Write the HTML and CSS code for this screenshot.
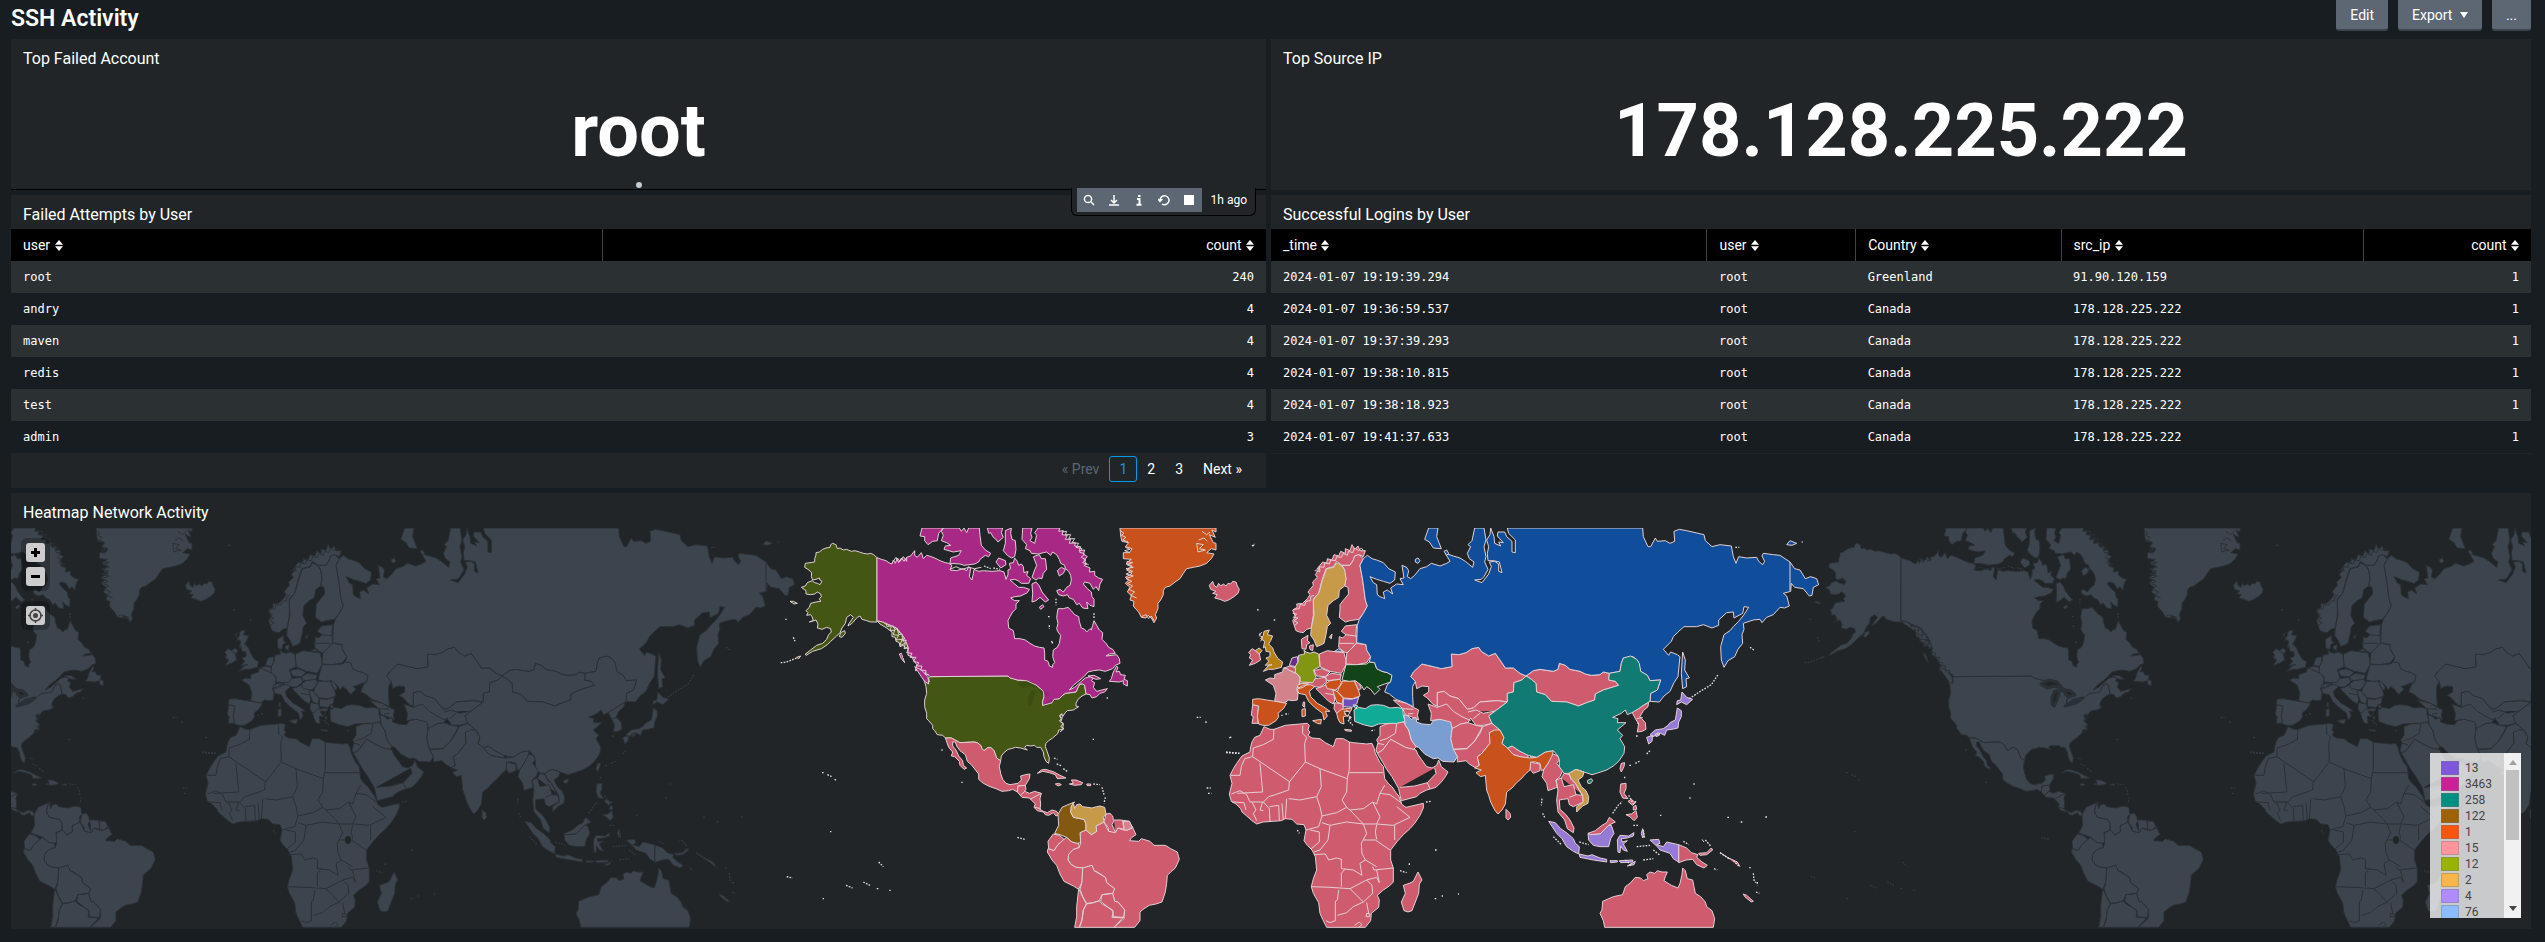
FILE: index.html
```html
<!DOCTYPE html>
<html lang="en">
<head>
<meta charset="utf-8">
<title>SSH Activity</title>
<link rel="stylesheet" href="styles.css">
</head>
<body>
<svg class="defs" aria-hidden="true">
  <symbol id="sort" viewBox="0 0 8 11"><path fill="currentColor" d="M0 4.700 4 0l4 4.700zM0 6.300h8L4 11z"/></symbol>
</svg>
<header class="top">
  <h1>SSH Activity</h1>
  <div class="actions">
    <button class="btn">Edit</button>
    <button class="btn">Export <svg class="caret" viewBox="0 0 8 6"><path fill="currentColor" d="M0 0h8L4 6z"/></svg></button>
    <button class="btn">...</button>
  </div>
</header>
<main>
  <div class="row">
    <section class="panel single hovered">
      <h2>Top Failed Account</h2>
      <p class="value">root</p>
      <span class="dot"></span>
      <div class="tools">
        <div class="toolset">
          <button aria-label="Open in search"><svg viewBox="0 0 12 12"><circle cx="5" cy="5" r="3.600"/><path d="M7.800 7.800 11 11"/></svg></button>
          <button aria-label="Download"><svg viewBox="0 0 12 12"><path d="M6 1v8M3 6l3 3 3-3M1 11h10"/></svg></button>
          <button aria-label="Inspect"><svg viewBox="0 0 12 12"><path d="M4 5h2.500v5.500M3.500 10.700h5M5 2h2.500" stroke-width="2"/></svg></button>
          <button aria-label="Refresh"><svg viewBox="0 0 12 12"><path d="M2 6a4.500 4.500 0 1 1 2 4M0 5l2 2.400L4.300 5"/></svg></button>
          <button aria-label="Stop"><svg viewBox="0 0 12 12"><path class="solid" d="M1 1h10v10H1z"/></svg></button>
        </div>
        <span>1h ago</span>
      </div>
    </section>
    <section class="panel single">
      <h2>Top Source IP</h2>
      <p class="value">178.128.225.222</p>
    </section>
  </div>

  <div class="row">
    <section class="panel">
      <h2>Failed Attempts by User</h2>
      <table>
        <colgroup><col class="w47"><col></colgroup>
        <thead><tr><th><button>user <svg><use href="#sort"/></svg></button></th><th class="num"><button>count <svg><use href="#sort"/></svg></button></th></tr></thead>
        <tbody>
          <tr><td>root</td><td class="num">240</td></tr>
          <tr><td>andry</td><td class="num">4</td></tr>
          <tr><td>maven</td><td class="num">4</td></tr>
          <tr><td>redis</td><td class="num">4</td></tr>
          <tr><td>test</td><td class="num">4</td></tr>
          <tr><td>admin</td><td class="num">3</td></tr>
        </tbody>
      </table>
      <nav class="pages" aria-label="Pagination">
        <a class="off">« Prev</a><a class="current" href="#">1</a><a href="#">2</a><a href="#">3</a><a class="next" href="#">Next »</a>
      </nav>
    </section>
    <section class="panel short">
      <h2>Successful Logins by User</h2>
      <table>
        <colgroup><col class="w34"><col class="w12"><col class="w16"><col class="w24"><col></colgroup>
        <thead><tr><th><button>_time <svg><use href="#sort"/></svg></button></th><th><button>user <svg><use href="#sort"/></svg></button></th><th><button>Country <svg><use href="#sort"/></svg></button></th><th><button>src_ip <svg><use href="#sort"/></svg></button></th><th class="num"><button>count <svg><use href="#sort"/></svg></button></th></tr></thead>
        <tbody>
          <tr><td>2024-01-07 19:19:39.294</td><td>root</td><td>Greenland</td><td>91.90.120.159</td><td class="num">1</td></tr>
          <tr><td>2024-01-07 19:36:59.537</td><td>root</td><td>Canada</td><td>178.128.225.222</td><td class="num">1</td></tr>
          <tr><td>2024-01-07 19:37:39.293</td><td>root</td><td>Canada</td><td>178.128.225.222</td><td class="num">1</td></tr>
          <tr><td>2024-01-07 19:38:10.815</td><td>root</td><td>Canada</td><td>178.128.225.222</td><td class="num">1</td></tr>
          <tr><td>2024-01-07 19:38:18.923</td><td>root</td><td>Canada</td><td>178.128.225.222</td><td class="num">1</td></tr>
          <tr><td>2024-01-07 19:41:37.633</td><td>root</td><td>Canada</td><td>178.128.225.222</td><td class="num">1</td></tr>
        </tbody>
      </table>
    </section>
  </div>

  <section class="panel">
    <h2 class="maptitle">Heatmap Network Activity</h2>
    <div class="map">
      <svg class="world" viewBox="11 528 2520 400" preserveAspectRatio="xMidYMid slice" role="img" aria-label="World map of network activity">
        <defs>
          <g id="land">
            <g transform="translate(780 500) scale(.33333)">
              <g class="olive">
                <path d="M291 173L281 164 272 160 262 162 250 160 238 156 225 152 214 154 200 148 190 150 180 144 172 146 168 134 158 130 152 134 150 142 138 144 128 148 118 156 108 158 108 165 104 176 104 186 90 188 76 190 74 202 84 208 95 218 94 230 98 240 108 238 118 234 120 240 126 244 120 254 112 250 104 248 96 242 82 248 76 258 64 262 78 272 78 282 92 284 104 282 112 276 122 282 124 290 118 296 122 304 108 306 92 310 88 322 78 332 84 338 80 346 92 344 96 350 100 362 88 366 108 360 114 372 112 384 126 388 140 382 152 386 154 396 146 404 140 418 128 430 110 436 92 450 76 462 78 466 98 454 124 446 142 434 152 424 170 408 180 398 186 384 196 370 200 352 212 344 220 352 206 372 204 378 216 370 232 352 240 348 246 358 260 362 272 366 291 366Z"/>
                <path d="M291 362L308 366 318 372 322 380 336 376 342 384 350 384 356 396 364 400 372 412 370 424 380 430 384 440 376 444 370 436 360 440 358 428 348 424 346 412 336 410 336 396 320 384 300 372ZM178 410l4-12 12-6 2 8-10 12zM50 472l12-4-6 8zM30 304l10 0 12 6-10 2z"/>
                <path d="M450 530L684 528 690 534 704 536 712 540 726 542 740 542 758 548 770 556 780 564 790 574 792 590 788 604 788 616 802 612 816 608 822 598 838 596 848 586 856 580 888 576 894 562 900 552 908 552 914 556 918 582 906 588 894 598 888 610 888 618 896 620 880 630 862 632 856 638 848 650 846 642 840 650 846 660 840 664 850 672 848 688 836 690 834 700 818 714 806 722 798 730 796 740 802 756 808 774 806 790 798 784 792 770 790 756 782 742 770 742 764 736 752 738 740 736 734 742 742 750 722 744 706 742 694 746 684 748 672 758 664 768 662 782 650 776 646 764 642 752 632 742 622 744 612 752 606 746 602 736 592 728 582 726 540 728 514 714 496 714 488 706 472 704 464 692 458 686 458 676 446 662 440 656 440 640 434 620 434 600 440 580 438 560 432 540 442 538 442 550 448 546 446 534Z"/>
              </g>
              <g class="magenta">
                <path d="M291 173L304 178 318 182 330 190 336 192 340 180 346 190 352 174 360 184 370 170 380 184 380 172 392 168 404 152 404 166 412 172 424 158 430 176 440 166 448 168 464 174 480 182 496 188 506 190 516 196 510 210 530 212 548 206 560 212 566 200 572 204 568 230 576 240 580 220 582 208 596 214 610 212 636 214 660 212 672 216 678 238 684 224 684 210 692 206 688 190 700 188 704 174 712 184 716 196 724 192 730 200 732 218 744 214 740 226 752 236 746 250 724 250 714 242 704 238 690 240 704 252 716 262 730 262 748 268 742 278 722 288 704 290 692 294 704 302 718 302 708 312 708 326 698 336 690 350 684 362 686 384 700 392 704 416 720 416 736 420 750 430 764 438 778 442 792 444 794 460 794 480 804 484 808 498 818 502 818 494 824 488 818 470 820 450 832 442 838 430 842 406 834 396 830 386 834 370 830 352 834 326 850 326 864 322 874 332 884 344 896 350 898 364 904 384 914 388 920 396 930 386 934 390 938 376 942 362 950 376 958 390 968 398 966 418 978 430 986 442 998 448 1006 460 988 462 978 468 996 466 1010 464 1018 476 1020 490 1006 496 998 506 976 514 958 510 940 512 924 516 914 528 900 540 880 556 868 570 884 562 904 544 916 534 930 530 942 532 934 542 944 548 940 562 950 574 966 570 982 566 974 576 960 580 950 590 936 594 932 588 930 584 918 582 914 556 908 552 900 552 894 562 888 576 856 580 848 586 838 596 822 598 816 608 802 612 788 616 788 604 792 590 790 574 770 556 740 542 712 540 690 534 684 528 450 530 440 520 428 520 420 510 406 512 410 494 400 480 396 470 384 466 384 440 372 412 350 384 336 378 308 366 291 362Z"/>
                <path d="M484 94L490 84 538 84 544 94 552 84 560 98 566 84 598 84 600 106 604 136 616 150 632 160 626 170 616 166 600 178 596 186 584 192 552 196 540 192 510 190 512 174 536 166 544 152 520 156 492 148 496 138 512 136 500 128 484 122 490 106ZM426 84L490 84 476 100 472 122 458 124 444 134 434 122 434 110 420 108ZM622 84L668 84 664 98 670 112 654 126 646 116 640 112 632 98 626 100ZM676 92L694 84 692 100 696 118 706 122 708 148 704 170 694 174 682 166 670 152 676 130Z"/>
                <path d="M728 84L756 84 752 100 756 112 750 122 764 130 770 106 764 98 774 84 840 84 836 94 850 92 846 104 862 106 856 118 872 118 868 130 886 128 884 138 902 140 898 152 914 150 910 162 922 170 912 180 920 192 912 196 930 204 928 216 944 214 944 226 956 234 968 238 960 252 956 272 948 260 940 268 930 250 914 246 910 252 922 266 934 276 936 290 942 298 942 320 930 316 920 306 924 326 908 324 898 310 890 314 880 298 868 294 862 284 850 288 836 284 830 272 840 268 850 276 860 262 870 256 874 240 872 226 866 214 856 206 854 196 842 190 838 178 830 164 818 156 812 166 800 156 790 158 776 162 754 160 750 152 736 146 740 134 726 118Z"/>
                <path d="M760 170L778 164 784 176 796 176 798 190 800 208 790 220 786 236 776 234 768 240 756 232 764 210 770 196ZM756 252L768 246 778 258 786 276 796 288 806 300 796 306 780 292 768 302 756 306 758 280ZM832 212l12-10 12 6-6 12-12 8zM778 322l10-8 4 6-10 8zM648 186l8-12 20 8 2 12-16 10zM1010 498L1014 504 1008 516 1018 514 1022 524 1036 526 1032 538 1042 542 1042 558 1030 552 1030 542 1018 546 988 544 994 536 1000 516ZM404 500L424 510 444 530 446 552 434 544 424 530ZM358 462l6-2 4 12 6 16-10-12zM924 528l18-2 20 10-14 2z"/>
              </g>
              <g class="pink">
                <path d="M496 714L514 714 540 728 582 726 592 728 602 736 606 746 612 752 622 744 632 742 642 752 650 774 662 782 658 800 662 820 668 838 678 850 690 854 714 850 724 840 722 828 736 824 750 822 748 836 736 856 714 858 712 876 698 868 686 872 666 874 648 866 630 860 610 850 596 838 596 822 588 812 574 794 562 784 556 764 540 752 530 738 526 726 518 726 518 738 528 750 536 768 548 782 550 796 560 804 552 808 540 796 538 784 524 770 514 768 518 756 506 742Z"/>
                <path d="M712 876L714 858 736 856 738 868 734 874 748 880 764 874 784 880 780 896 782 912 780 928 790 934 802 938 816 930 830 934 836 944 828 948 820 938 806 946 796 944 790 936 772 932 762 922 766 912 748 894 726 892Z M734 874L720 888M750 898L784 880M764 922L782 926"/>
                <path d="M772 820L784 810 796 808 810 812 822 816 840 826 858 834 832 836 826 824 808 818 788 814ZM868 852L880 850 874 840 888 840 908 848 904 854 884 856ZM826 852l10-2 8 4-10 4zM920 852h12v5h-10z"/>
                <path d="M820 1002L838 1006 852 1018 834 1034 822 1052 806 1046 804 1024Z"/>
                <path d="M972 966L986 994 1006 996 1014 984 1030 990 1042 990 1056 978 1068 1004 1056 1012 1048 1022 1076 1024 1084 1016 1110 1024 1122 1036 1156 1036 1172 1046 1192 1056 1198 1078 1186 1104 1172 1116 1162 1126 1160 1150 1156 1176 1146 1206 1128 1212 1108 1216 1092 1226 1080 1236 1080 1262 1064 1282 1002 1282 1032 1256 1034 1230 1014 1206 1004 1204 998 1180 1004 1166 980 1148 976 1132 952 1116 942 1112 936 1096 912 1104 888 1102 874 1094 864 1080 866 1062 880 1048 898 1042 902 1028 900 998 918 990 934 1004 950 994 948 978Z"/>
                <path d="M978 942L990 940 998 948 1000 960 1022 960 1048 964 1058 984 1042 990 1014 984 1006 998 986 994 984 982 972 966ZM1002 962L996 974 1006 996M1028 962L1032 990"/>
                <path d="M804 1046L822 1052 834 1034 852 1018 860 1012 876 1026 896 1030 898 1042 880 1048 866 1062 864 1080 874 1094 888 1102 908 1104 906 1146 896 1168 880 1158 852 1144 840 1122 830 1096 816 1080 802 1056Z"/>
                <path d="M908 1104L936 1096 942 1112 976 1132 980 1148 1004 1166 998 1180 966 1184 958 1202 940 1208 920 1212 908 1190 900 1168 906 1146ZM896 1166L908 1190 920 1212 910 1230 906 1260 898 1282 884 1282 890 1250 890 1220ZM920 1210L940 1208 958 1202 966 1212 998 1230 1000 1250 1030 1252 1002 1282 898 1282 906 1260 910 1230ZM966 1184L998 1180 1004 1204 1014 1206 1034 1230 1030 1254 996 1252 1000 1234 982 1220 962 1204Z"/>
                <path d="M1288 256L1298 244 1302 256 1310 262 1316 250 1322 258 1330 252 1338 258 1344 250 1352 252 1358 244 1368 246 1372 258 1378 268 1374 280 1362 290 1346 300 1334 304 1320 298 1304 294 1312 284 1298 280 1308 274 1292 268Z"/>
              </g>
              <path class="rose" d="M1030 964L1048 964 1056 980 1044 990 1032 990Z"/>
              <path class="brown" d="M834 944L846 922 864 914 884 906 874 918 872 936 880 952 912 958 918 972 918 990 900 998 902 1028 892 1030 876 1026 860 1012 840 1004 824 1000 836 976Z"/>
              <path class="tan" d="M880 908L884 926 890 914 900 912 908 920 936 924 950 920 960 918 974 922 978 942 970 952 972 966 948 978 950 994 934 1004 918 990 918 972 912 958 880 952 872 936 874 920Z"/>
              <path class="orange" d="M1020 84L1308 84 1308 96 1296 90 1306 112 1288 104 1300 128 1308 130 1308 150 1294 146 1280 158 1302 162 1294 176 1280 190 1260 198 1240 202 1220 206 1210 220 1200 236 1188 244 1170 258 1156 262 1150 272 1150 284 1142 300 1134 310 1134 326 1126 344 1130 354 1122 368 1114 354 1104 346 1098 354 1084 352 1076 336 1068 328 1060 318 1062 304 1050 300 1054 286 1042 276 1050 262 1036 250 1046 240 1036 232 1056 220 1040 210 1056 198 1038 190 1054 178 1030 176 1030 158 1048 158 1056 146 1036 140 1046 128 1026 124 1022 108ZM1250 130l20 4-12 12 18 4-22 6z"/>
              <path class="line" d="M318 372l16 8-4 12 14-2-4 14 16 2-8 14 18-2-6 18 16-6-4 16 14-2-6 14 16 2-6 12 18 0-8 12 16 4-4 10 14 0-4 12 16 2-2 12 10 0M338 376l8 14 6-4 4 18 10-2 2 20 12 0M1022 92l10 8-8 6 14 6-10 8 16 6M1036 142l14 6-16 4 16 6M1040 184l18 4-18 6 20 8-22 4 20 8-20 8 22 6-22 8 18 8-14 6 16 8-12 10 18 8-12 10 18 8M1084 350l14-6 8 12 8-8 8 14M1266 94l14 10 10-8M1256 120l16-6 10 10M846 96l14-2-4 10 16 0-6 12 18 0-8 12 20 2-8 12 18 4-8 10 16 6-10 10 14 8-10 8 18 6M846 640l-8 8 10 6-10 8 12 8-8 10 10 6-12 10M340 184l8-12 8 16 8-14 8 10 8-12M510 208l18-8 18 8 20-6 18 4 20-4"/>
              <path class="islands" d="M2 488L16 487 30 482 50 474M126 818h5M142 824l14 6M164 838l7 5M16 358h4M40 412l5 12M544 847h4M484 750h4M150 995h4M712 1012l22 6M296 1086l14 14M250 1146l20 10M290 1166h5M198 1156l20 8M20 1130l18 4M128 1196h4M328 1171h4M822 774l10 4M830 792l16 6M850 806l14 10M940 852l20 2M966 862l6 22M976 892l-4 18M1250 652h12M1278 664v7M1350 712h4M1338 758l38 2M1280 864h12M1284 880h10M938 718h4M980 594h4M1418 138l6-4M808 376v10M814 424l6 6M816 430l4-8M804 350h5M828 296v20M942 340v16M612 198l20 8M640 204l20 4"/>
            </g>
            <g transform="translate(1220 500) scale(.33333)">
              <g class="pink">
                <path d="M218 330L232 322 230 312 248 310 262 296 270 284 264 276 280 256 278 246 292 232 286 224 298 206 290 208 308 186 320 190 322 176 336 180 342 164 356 168 362 154 376 160 376 146 390 152 396 134 404 148 414 138 420 152 436 152 430 170 416 164 404 168 400 180 390 196 366 196 350 184 340 200 318 206 306 240 296 280 280 296 280 346 274 384 260 388 250 398 238 396 228 392 218 362 226 350Z"/>
                <path d="M366 196L390 196 400 180 404 168 416 164 430 176 420 196 428 240 436 300 442 318 430 340 416 358 390 362 376 366 358 352 360 330 360 314 374 296 386 282 384 262 374 258 378 236 372 206Z"/>
                <path d="M244 418L264 406 262 422 270 428 260 434 258 448 246 446ZM268 438l12-4-2 18-8-4zM96 446L106 452 118 462 122 480 106 490 88 496 98 480 88 474 92 464 86 458ZM192 504L210 498 228 504 232 522 210 512ZM98 614L116 618 114 640 114 670 96 670 100 650 94 646ZM232 552L262 548 262 558 250 564 234 564ZM298 462L322 452 350 456 372 458 378 480 378 494 364 520 330 514 300 500ZM282 512L306 506 330 516 316 530 290 528ZM262 548L284 536 316 532 320 546 300 562 270 558ZM316 530L334 520 364 524 360 538 322 542ZM402 542L416 546 424 564 416 572ZM288 566L316 556 340 570 344 600 340 612 326 604 302 580ZM316 580L340 584M344 608L368 612 370 626 350 640 342 626ZM250 606l4 0 0 16-6-4z"/>
                <path d="M358 410L368 414 378 404 364 394 376 378 410 374 408 400 410 428 396 444 382 458 372 456 356 442ZM376 404L408 408M358 430L402 430M410 430L438 434 440 450 452 470 440 488 410 494 378 492 380 460 396 444Z"/>
                <path d="M572 530L580 516 594 500 606 492 640 500 664 506 696 500 694 462 716 464 738 458 756 446 776 442 784 454 806 468 826 460 840 480 856 504 880 504 900 520 918 528 906 540 882 548 880 576 862 580 862 606 832 602 800 604 780 606 760 624 742 628 716 596 690 588 672 574 652 578 652 618 640 614 622 594 610 586 626 576 626 560 606 558 590 566 586 544Z"/>
                <path d="M652 578L672 574 690 588 716 596 742 628 760 624 780 606 832 602 862 606 830 630 808 646 816 670 790 676 768 676 752 654 744 668 722 672 700 686 680 664 656 658 632 662 634 640 624 612 652 622ZM652 622L680 612 700 634 726 650 752 662M744 636L768 630 790 640 830 632M760 656L780 640"/>
                <path d="M696 686L722 672 744 668 768 676 788 680 780 700 762 726 740 746 698 748 692 716ZM788 680L816 670 840 690 808 698 810 730 784 762 772 770 778 800 764 802 748 792 738 782 712 786 712 770 700 748 740 746 762 726ZM520 600L560 610 580 622 596 630 592 646 596 660 574 650 556 644 548 626ZM550 626L580 628M564 642L580 640"/>
                <path d="M480 680L500 672 552 666 556 676 566 690 574 720 588 740 580 750 556 742 512 718 488 750 472 760 468 750 474 728 470 720 480 706ZM530 672L526 700 500 716 480 722M474 730L492 734"/>
                <path d="M472 760L488 750 512 718 556 742 588 750 594 764 604 778 620 800 636 804 650 796 656 780 664 800 684 816 676 830 664 846 648 862 620 870 600 880 590 890 544 902 540 886 536 866 516 830 500 808 490 790ZM540 862L584 858 622 848 648 820 644 804M622 848L630 866"/>
                <path d="M132 680L150 688 162 688 196 676 240 672 262 670 268 676 264 690 270 696 264 706 276 714 300 716 316 728 340 740 348 716 370 716 388 726 400 728 440 732 456 730 462 744 466 760 480 788 490 800 494 836 506 852 516 860 528 878 536 888 546 914 558 922 610 910 610 924 600 946 584 970 570 986 550 1004 532 1024 512 1050 512 1080 520 1104 520 1146 508 1158 490 1170 472 1186 478 1200 476 1222 454 1240 452 1262 436 1282 320 1282 308 1258 300 1240 296 1208 280 1180 274 1160 280 1136 290 1110 286 1070 276 1050 262 1036 252 1022 258 990 252 974 230 972 216 958 196 956 184 962 160 964 130 966 110 972 96 962 80 948 66 936 62 926 48 912 34 904 28 882 36 850 30 826 40 806 50 790 66 768 90 756 92 740 96 726 104 712 120 706Z"/>
                <path class="line" d="M162 688L160 718 130 734 100 744 98 770M98 770L210 846M98 770L74 776 64 800 60 826 32 826M120 790L128 876 52 880M248 676L248 700 260 712 254 730 256 786 208 846 206 870 166 884 146 890 130 906M256 786L300 806 382 836 388 808 388 726M388 818L490 818M300 806L304 860 290 890 240 900 206 896M382 836L380 876 366 900 380 922 350 938 306 948 300 920 290 890M380 922L390 930 430 926 458 906 470 912 480 880 494 856M480 880L510 884 546 910M306 948L296 980 258 990M306 968L330 976 380 966 430 972M390 930L430 972 470 972 480 950 458 906M470 972L520 976 570 952 530 920M524 976L524 1020M430 972L440 1000 424 1030 426 1060 436 1080 470 1100M330 976L324 1020 300 1050 282 1056M270 990l28 6 0 30-24 20M282 1064L316 1062 326 1080 350 1074 364 1078 364 1106 400 1110 426 1126 420 1090 436 1080M274 1160L330 1162 390 1166 440 1140M376 1106L364 1120 364 1160M356 1170L352 1200 346 1204 346 1262 330 1268 318 1262M352 1246L380 1238 400 1220 430 1206 458 1180 456 1156 440 1140M390 1166L410 1186 430 1206M440 1208L446 1240M430 1020L466 1020 510 1050M458 1100L462 1110 520 1104M440 1140L470 1132 478 1148 470 1110M470 974L466 996 470 1018M34 882L60 872 80 884 90 906 128 906M36 906L72 908 78 930M96 906L108 930 100 940 110 962M128 906L120 930 130 932M130 906L148 926 150 964M148 920L176 916 178 962M186 910L190 960M200 896L198 930 196 956M404 1276l14-10 8 8-10 8M440 1240l10 2-2 8-10 0z"/>
                <path d="M594 1116L600 1128 606 1140 598 1152 596 1180 586 1206 576 1232 564 1236 552 1232 544 1206 556 1180 550 1156 568 1150 580 1144ZM862 744L876 738 900 754 924 762 924 774 900 770 880 764ZM930 780L940 776 938 788 960 792 960 812 940 820 930 808ZM930 766L950 762 952 772 934 774ZM858 928L870 940 872 952 864 960 858 954Z"/>
                <path d="M918 528L940 512 960 508 1000 514 1014 508 1018 490 1036 496 1050 508 1080 514 1096 522 1114 526 1140 524 1150 516 1168 520 1166 540 1186 544 1196 556 1150 570 1126 582 1124 600 1100 608 1076 618 1040 606 994 604 976 584 950 576 948 550 934 538Z"/>
                <path d="M1236 636L1256 626 1270 616 1286 606 1284 620 1270 632 1260 650 1276 668 1278 688 1266 694 1252 696 1256 672 1246 656ZM1250 656L1268 652M1200 806l4-16 10-2-2 12-8 16z"/>
                <path d="M972 806L984 790 986 776 1000 762 1014 768 1018 780 1010 790 1028 812 1020 830 1008 840 1012 862 1006 864 984 872 980 850 966 830ZM1008 840L1024 834 1032 820 1048 824 1054 840 1066 850 1086 886 1090 906 1060 920 1048 914 1044 896 1030 898 1018 900 1020 928 1038 944 1050 960 1062 984 1060 998 1042 986 1034 960 1014 936 1010 900 1014 870ZM1024 834L1032 860 1060 854 1068 884 1090 886M1068 884L1048 892"/>
                <path d="M1104 1000L1126 992 1146 976 1160 968 1168 952 1186 966 1166 976 1152 994 1140 1002 1112 1004ZM1376 1034L1400 1044 1414 1058 1434 1064 1430 1072 1446 1086 1462 1096 1452 1104 1430 1094 1418 1078 1398 1080 1376 1088ZM1436 1060L1460 1058 1474 1044 1478 1050 1460 1064 1440 1066ZM1202 852L1218 850 1218 866 1212 880 1224 896 1208 894 1200 876ZM1218 944L1234 942 1248 932 1252 952 1242 962 1230 950ZM1224 904l10-6 12 10-8 8zM1240 920l8-4 2 12-10 2z"/>
                <path d="M1154 1282L1150 1262 1140 1240 1146 1230 1148 1204 1180 1190 1208 1184 1216 1160 1230 1150 1246 1132 1262 1134 1270 1142 1284 1136 1280 1124 1290 1116 1304 1120 1312 1112 1326 1116 1342 1116 1336 1130 1332 1142 1354 1156 1374 1164 1380 1150 1386 1124 1388 1104 1396 1112 1402 1136 1418 1140 1422 1160 1426 1180 1442 1190 1456 1206 1460 1220 1476 1232 1484 1256 1480 1282Z"/>
                <path d="M1570 1182l10 4 20 18-6 2-20-16zM1446 1018l6 8M1500 1058l22 14 30 14 8 14"/>
              </g>
              <path class="tan" d="M350 188L366 198 374 210 378 236 374 258 358 270 356 292 340 302 324 316 320 346 332 370 322 380 318 404 312 430 300 436 290 440 282 420 272 406 274 384 282 346 280 300 298 276 308 238 320 206 342 202ZM328 412l8-10-2 14z"/>
              <path class="gold" d="M132 394L148 390 142 404 158 408 152 422 146 432 158 444 162 456 174 476 188 486 184 502 160 508 146 508 130 514 144 498 156 494 136 496 146 484 138 474 150 470 150 456 138 454 136 440 130 444 134 424 122 416 130 406ZM106 452l12-8 8 8-8 10z"/>
              <path class="purple" d="M216 474L232 470 234 486 226 500 208 496Z"/>
              <path class="lime" d="M252 450L258 456 270 460 282 456 296 462 298 480 300 500 280 510 288 532 278 548 240 546 240 530 226 520 226 500 234 486 236 466 254 462Z"/>
              <path class="rose" d="M190 504L200 506 210 512 232 522 240 534 238 552 230 566 234 582 232 600 218 602 206 600 192 610 164 602 168 580 160 556 136 540 150 534 164 536 164 524 188 516Z"/>
              <path class="orange" d="M98 598L116 596 140 600 166 604 200 610 190 626 174 640 176 650 168 662 146 676 128 676 116 672 112 650 116 618 98 614ZM232 566L250 556 272 554 284 560 268 574 272 590 292 610 310 620 330 634 316 634 322 648 312 660 308 640 284 622 266 604 256 584 236 580ZM278 662l26-4-2 14-10-2zM246 628l10-2 0 22-10 2zM232 556L246 550 262 552 250 562 236 566ZM316 552L330 542 360 538 366 550 348 570 322 566ZM366 544L402 542 416 572 420 588 398 596 370 594 352 574ZM338 570L352 574 370 594 366 612 350 606ZM350 640L364 628 396 624 392 634 372 634 380 648 370 650 372 672 360 668 354 656ZM374 688l20 2 0 4-18-2z"/>
              <path class="violet" d="M370 596L394 598 416 592 410 612 396 622 370 620Z"/>
              <path class="forest" d="M378 494L410 494 440 492 448 486 464 488 470 506 486 514 502 518 516 526 512 546 494 552 472 560 480 568 464 584 452 568 440 560 432 570 424 556 406 542 388 544 366 540 372 516Z"/>
              <path class="turq" d="M402 630L416 622 436 626 452 616 470 614 490 616 510 624 532 622 548 626 550 648 556 664 530 670 510 670 476 672 456 680 430 674 404 664ZM400 614l14 4-8 8z"/>
              <path class="blue" d="M430 176L442 166 456 176 470 180 490 188 506 206 526 216 524 240 510 250 490 244 470 238 450 230 460 248 470 254 472 284 480 290 494 296 490 276 502 270 518 282 512 264 530 252 550 254 540 236 552 234 546 196 560 202 566 212 562 230 572 236 584 226 600 206 620 200 634 190 660 198 680 190 690 184 676 160 700 168 720 174 736 184 758 202 762 186 748 176 742 160 752 140 744 134 756 122 764 84 792 84 798 120 792 140 798 170 794 186 804 208 792 230 784 238 764 240 786 248 806 222 814 200 808 186 824 184 836 192 836 214 846 218 838 186 820 182 804 182 802 160 806 140 800 120 810 104 812 84 822 110 824 130 842 138 836 126 850 128 832 108 834 96 854 96 860 110 876 124 876 156 886 158 886 120 866 100 862 84 1268 84 1270 110 1284 140 1292 140 1306 114 1312 124 1336 122 1350 130 1364 124 1362 94 1378 88 1400 92 1452 104 1456 122 1476 140 1500 134 1534 138 1540 170 1548 190 1556 170 1580 174 1610 172 1616 184 1628 194 1634 184 1626 168 1630 160 1660 164 1680 166 1710 186 1724 206 1740 210 1756 236 1772 230 1790 236 1796 254 1780 262 1776 286 1768 288 1750 266 1724 262 1714 250 1712 274 1690 280 1700 288 1708 318 1694 324 1680 322 1660 344 1640 352 1626 368 1620 358 1600 360 1570 370 1572 388 1566 404 1568 430 1554 448 1544 470 1524 482 1512 502 1504 480 1502 440 1512 404 1530 392 1540 380 1556 364 1572 344 1586 322 1572 320 1568 340 1542 354 1540 336 1520 338 1496 360 1496 376 1476 384 1450 374 1430 380 1392 380 1376 394 1360 410 1354 424 1330 448 1346 466 1352 456 1372 464 1380 470 1374 530 1362 548 1350 574 1332 588 1318 606 1290 604 1292 580 1312 570 1322 540 1290 542 1282 526 1262 514 1254 484 1240 470 1210 474 1204 490 1200 514 1168 520 1150 516 1140 524 1114 526 1096 522 1080 514 1050 508 1036 496 1018 490 1014 508 1000 514 960 508 940 512 918 528 900 520 880 504 856 504 840 480 826 460 806 468 784 454 776 442 756 446 738 458 716 464 694 462 696 500 664 506 640 500 606 492 580 516 572 530 586 544 578 560 578 590 580 620 560 610 528 598 508 582 494 576 502 554 512 546 516 526 502 518 486 514 470 506 464 488 448 486 452 470 440 450 438 434 410 428 412 376 418 358 430 340 442 318 436 300 428 240 420 196Z"/>
              <path class="blue" d="M1388 456L1396 480 1394 510 1408 534 1398 536 1400 560 1388 566 1384 520ZM626 84L654 84 650 110 664 146 640 144 628 126 614 118ZM344 454l12-8 14 8zM1700 134l10-12 20 8-14 6zM586 178l8-4 6 8-6 8-8-4zM672 154l8-4 6 10-6 6zM1710 186L1710 272"/>
              <path class="sky" d="M552 644L564 648 574 658 588 652 590 666 606 672 632 674 640 662 660 658 692 666 696 686 692 716 700 748 712 770 702 786 668 784 654 774 640 776 614 762 596 742 588 740 574 720 566 690 556 676Z"/>
              <path class="orange" d="M808 698L824 690 840 690 852 712 846 730 862 744 880 764 900 770 930 774 950 772 976 756 1000 752 996 768 984 790 972 808 964 812 960 790 946 786 932 786 930 810 916 822 906 834 890 848 876 864 860 876 856 912 846 930 834 942 824 930 812 906 806 886 800 870 796 826 782 830 768 818 784 810 764 804 778 796 772 770 784 762 810 730Z"/>
              <path class="teal" d="M918 528L934 538 948 550 950 576 976 584 994 604 1040 606 1076 618 1100 608 1124 600 1126 582 1150 570 1196 556 1186 544 1166 540 1168 520 1200 514 1204 490 1210 474 1232 468 1250 478 1258 490 1262 514 1282 526 1290 542 1322 540 1312 570 1292 580 1290 604 1270 616 1256 626 1236 638 1222 644 1216 630 1204 640 1178 652 1194 656 1192 668 1218 668 1204 680 1192 690 1208 706 1200 716 1214 740 1212 760 1196 784 1180 798 1160 810 1130 820 1116 824 1092 816 1068 808 1048 820 1032 820 1018 800 1018 780 1014 768 1000 752 976 756 950 772 924 766 900 754 876 738 862 744 846 730 852 712 840 690 816 670 806 648 830 630 862 606 862 580 880 576 882 548 906 540ZM1102 842l12-6 4 6-6 8-8 0z"/>
              <path class="lilac" d="M1372 624L1384 632 1384 650 1376 666 1374 684 1356 688 1340 690 1334 706 1322 700 1298 710 1290 704 1306 690 1330 686 1344 676 1350 668 1366 660ZM1386 576L1400 592 1418 598 1400 614 1384 606 1370 614 1372 602 1382 600ZM1280 712L1298 706 1296 724 1286 732ZM1306 702l12-4 0 8-10 4z"/>
              <path class="tan" d="M1046 820L1068 808 1092 816 1088 830 1074 840 1084 860 1098 872 1106 890 1104 910 1088 918 1070 936 1070 920 1090 906 1088 886 1066 850 1054 836Z"/>
              <path class="lilac" d="M986 964L1006 968 1022 986 1042 1000 1060 1016 1066 1030 1078 1040 1076 1062 1060 1054 1040 1040 1026 1016 1010 1000ZM1078 1062L1104 1068 1116 1064 1140 1074 1160 1078 1160 1086 1120 1080 1080 1072ZM1170 1082l22 0 0 4-20 2zM1198 1082l40-2 0 6-36 2zM1104 1000L1112 1004 1140 1002 1166 976 1174 976 1182 1000 1172 1016 1166 1040 1140 1040 1120 1036 1106 1020ZM1192 1020L1200 1006 1226 1008 1242 998 1240 1008 1222 1014 1204 1016 1206 1026 1222 1022 1210 1032 1222 1054 1210 1050 1202 1038 1200 1058 1194 1056ZM1264 1000l4-14 4 20-4 8zM1290 1020L1316 1018 1320 1030 1310 1034 1330 1040 1340 1026 1376 1034 1376 1086 1360 1076 1350 1060 1320 1050 1312 1040ZM1222 1098l24-14-4 10z"/>
              <path class="line" d="M218 340l12 2-10 10 14 2-12 8 12 6-10 8M222 328l16-2 2-12 14 2 4-12 14-2 0-12 10-4M284 212l16 2-2-14 14 2 2-14 14 4 4-12 14 2 4-12 14 2 6-12 12 6 4-12 12 4 6-14 12 8 8-8 8 10M378 630l12 8-6 8 10 6-8 8M126 396l-8 10 10 6-6 12"/>
              <path class="islands" d="M96 138l8-6M112 328l6 6M162 362l4-6M120 400l-2 10M196 642h10M184 646h4M454 692l10-2M618 906l16-2M28 714l6-4M18 756l44 4M232 990l6 10M374 640l20 20M384 660l14 16M390 650l4 8M645 1050h5M540 1112l20 6M568 1090v5M644 1196h8M665 1188h4M714 1182h3M966 896l-2 20M968 940l6 12M1000 1010l24 24M1214 830v5M1228 796h6M1246 790l16-8M1280 762l10-10M1408 596l36-24 30-18 20-30M1590 442l14 10M1546 142h12M1420 852h4M1408 894h4M1320 946h4M1522 952h5M1562 966h5M1636 951h5M1254 668v4M1178 940l18-26M1200 912l6-8M1226 886l14 26 10-10M1240 976l14 0M1270 990l4 26M1250 1040l40-4M1270 1080l30-4M1300 1050l20 16M1078 1026l28 8M1390 1024l16 10M1456 1020l18 20M1500 1058l30 20M1540 1082l18 18M1482 1106l10 4M1588 1102l4 2M1600 1120l2 20 6 8M1608 1176l10 4M1612 1146v10M1248 708h5M1216 1080l20 18M1745 126h3"/>
            </g>
          </g>
          <g id="lakes">
            <path d="M1017 684L1025 680 1033 682 1038 688 1030 686 1023 688ZM1028 697L1031 691 1036 690 1033 700 1030 706 1028 704ZM1037 689L1047 691 1051 695 1044 697 1041 693ZM1041 706L1050 700 1059 698 1052 703Z"/>
          </g>
        </defs>
        <g class="plain">
          <use href="#land" x="-1024"/><use href="#land" x="1024"/>
          <g class="lake"><use href="#lakes" x="-1024"/><use href="#lakes" x="1024"/><ellipse cx="348" cy="840" rx="3" ry="4"/><ellipse cx="2396" cy="840" rx="3" ry="4"/></g>
        </g>
        <use href="#land"/>
        <use class="tint" href="#lakes"/>
      </svg>
      <div class="controls">
        <div class="ctl"><button aria-label="Zoom in"><svg viewBox="0 0 19 19"><path d="M9.500 5v9M5 9.500h9" stroke="#000" stroke-width="3"/></svg></button><button aria-label="Zoom out"><svg viewBox="0 0 19 19"><path d="M5 9.500h9" stroke="#000" stroke-width="3"/></svg></button></div>
        <div class="ctl"><button aria-label="Reset view"><svg viewBox="0 0 19 19" fill="none" stroke="#444" stroke-width="1.500"><circle cx="9.500" cy="9.500" r="5.500"/><path d="M9.500 2v3M9.500 14v3M2 9.500h3M14 9.500h3"/><circle cx="9.500" cy="9.500" r="1.800" fill="#444"/></svg></button></div>
      </div>
      <div class="legend">
        <ul>
          <li><i style="background:#7e57dc"></i>13</li>
          <li><i style="background:#cc2096"></i>3463</li>
          <li><i style="background:#008f80"></i>258</li>
          <li><i style="background:#9d6300"></i>122</li>
          <li><i style="background:#f8560b"></i>1</li>
          <li><i style="background:#ff969e"></i>15</li>
          <li><i style="background:#98b300"></i>12</li>
          <li><i style="background:#f7b649"></i>2</li>
          <li><i style="background:#ae8cff"></i>4</li>
          <li><i style="background:#8cbcff"></i>76</li>
        </ul>
        <div class="bar"><svg viewBox="0 0 8 5"><path fill="#a0a0a0" d="M0 5h8L4 0z"/></svg><span></span><svg viewBox="0 0 8 5"><path fill="#444" d="M0 0h8L4 5z"/></svg></div>
      </div>
    </div>
  </section>
</main>
</body>
</html>
```
FILE: styles.css
```css
* { box-sizing: border-box; }
body {
  margin: 0;
  padding: 0 14px 13px 11px;
  background: #171d21;
  color: #fff;
  font: 14px/20px Roboto, "Liberation Sans", sans-serif;
}
h1, h2, p, ul { margin: 0; padding: 0; }
button { font: inherit; color: inherit; border: 0; background: none; padding: 0; }
.defs { position: absolute; width: 0; height: 0; }

.top { display: flex; justify-content: space-between; align-items: flex-start; height: 39px; }
h1 { font-size: 23px; line-height: 38px; font-weight: 600; }
.actions { display: flex; gap: 10px; }
.btn {
  height: 31px;
  padding: 0 14px;
  background: #5c6773;
  border-bottom: 2px solid #3c444d;
  border-radius: 0 0 3px 3px;
}
.caret { width: 8px; height: 6px; margin-left: 4px; vertical-align: 2px; }

.row { display: grid; grid-template-columns: 1fr 1fr; margin-bottom: 5px; }
.row > .panel:first-child { margin-right: 5px; }
.panel { background: #212527; position: relative; }
h2 { font-size: 16px; line-height: 20px; font-weight: 400; padding: 10px 12px 4px; }
.short { align-self: start; padding-bottom: 1px; }
.single { height: 151px; }
.hovered { border-bottom: 1px solid #000; }
.value { font-size: 74px; line-height: 84px; font-weight: 700; text-align: center; padding-top: 16px; }
.dot {
  position: absolute; left: 50%; bottom: 1px;
  width: 6px; height: 6px; margin-left: -3px; border-radius: 50%; background: #c3cbd4;
}
.tools {
  position: absolute; right: 10px; top: 149px; z-index: 1;
  display: flex; align-items: center; gap: 9px;
  padding: 0 8px 3px 5px;
  background: #212527;
  border: 1px solid #000; border-top: 0; border-radius: 0 0 6px 6px;
  font-size: 12px;
}
.toolset { display: flex; background: #5c6773; }
.toolset button { width: 25px; height: 24px; display: grid; place-items: center; }
.toolset svg { width: 12px; height: 12px; fill: none; stroke: #fff; stroke-width: 1.5; }
.toolset .solid { fill: #fff; stroke: none; }

table { width: 100%; table-layout: fixed; border-collapse: collapse; }
th, td { height: 32px; padding: 0 12px; text-align: left; font-weight: 400; }
thead { background: #000; }
th + th { border-left: 1px solid #3c444d; }
th svg { width: 8px; height: 11px; margin-left: 1px; vertical-align: -1px; }
td { font-family: "DejaVu Sans Mono", monospace; font-size: 12px; }
tbody tr { background: #171d21; }
tbody tr:nth-child(odd) { background: #2b3033; }
.num { text-align: right; }
.w47 { width: 47.1%; }
.w34 { width: 34.6%; }
.w12 { width: 11.8%; }
.w16 { width: 16.3%; }
.w24 { width: 24%; }

.pages { display: flex; justify-content: flex-end; padding: 3px 14px 6px; }
.pages a { height: 26px; line-height: 24px; padding: 0 9px; border: 1px solid transparent; color: #fff; text-decoration: none; }
.pages .off { color: #5c6773; }
.pages .current { color: #1e93d6; border-color: #009ceb; border-radius: 3px; }

.maptitle { padding-bottom: 5px; }
.map { position: relative; height: 401px; overflow: hidden; }
.world { display: block; width: 100%; height: 400px; }
.world path { stroke: var(--edge, #e2cfd4); stroke-width: 3px; stroke-linejoin: round; }
.pink { fill: var(--land, #cf5c6e); }
.olive { fill: var(--land, #435613); }
.magenta { fill: var(--land, #a82985); }
.rose { fill: var(--land, #d2828a); }
.brown { fill: var(--land, #835911); }
.tan { fill: var(--land, #c69a49); }
.gold { fill: var(--land, #b58112); }
.orange { fill: var(--land, #c9511b); }
.purple { fill: var(--land, #6b2e86); }
.violet { fill: var(--land, #6c4fba); }
.lilac { fill: var(--land, #957bd5); }
.lime { fill: var(--land, #829614); }
.forest { fill: var(--land, #114518); }
.turq { fill: var(--land, #10ab96); }
.blue { fill: var(--land, #104e9b); }
.sky { fill: var(--land, #7a9ed2); }
.teal { fill: var(--land, #107a73); }
.world .line { fill: none; }
.world .islands { fill: none; stroke: var(--isle, #e2e2e2); stroke-width: 4px; stroke-dasharray: 5 4; }
.plain { --land: #3c444d; --edge: #2a3035; --isle: #343b42; }
.lake { fill: #212527; }
.tint { fill: #000; fill-opacity: .1; --edge: none; }

.controls { position: absolute; left: 10px; top: 10px; display: grid; gap: 10px; }
.ctl { display: grid; gap: 5px; padding: 5px; border-radius: 6px; background: rgba(0, 0, 0, .25); }
.ctl button { width: 19px; height: 19px; border-radius: 3px; background: #ccc; }
.ctl svg { display: block; width: 19px; height: 19px; }

.legend {
  position: absolute; right: 10px; bottom: 11px;
  width: 91px; height: 165px; overflow: hidden;
  display: flex; justify-content: space-between;
  background: rgba(255, 255, 255, .76);
  color: #444; font-size: 12px; line-height: 12px;
}
.legend ul { list-style: none; padding: 7px 0 0 11px; }
.legend li { display: flex; align-items: center; gap: 6px; height: 16px; }
.legend i { width: 18px; height: 14px; border: 1px solid rgba(120, 120, 120, .4); }
.bar { width: 17px; padding: 7px 2px; background: #f1f1f1; display: flex; flex-direction: column; align-items: center; }
.bar svg { width: 8px; height: 5px; }
.bar span { width: 13px; height: 70px; margin: 5px 0 auto; background: #c1c1c1; }
```
